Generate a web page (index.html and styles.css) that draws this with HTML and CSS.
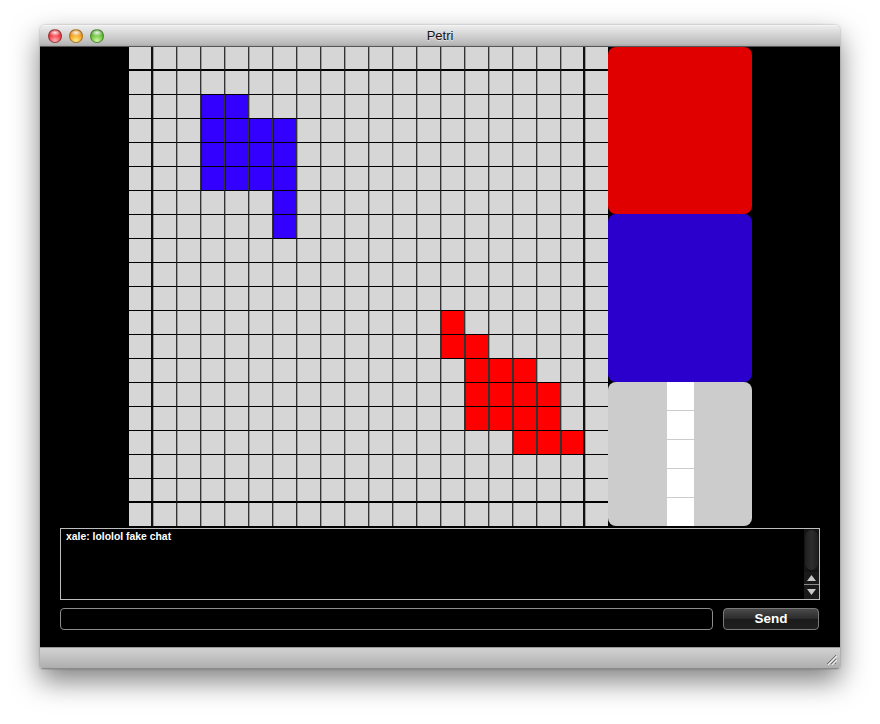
FILE: index.html
```html
<!DOCTYPE html>
<html>
<head>
<meta charset="utf-8">
<title>Petri</title>
<link rel="stylesheet" href="styles.css">
</head>
<body>
<div class="window">
  <div class="titlebar">
    <div class="lights">
      <span class="light close"></span>
      <span class="light minimize"></span>
      <span class="light zoom"></span>
    </div>
    <div class="title">Petri</div>
    <div class="spacer"></div>
  </div>
  <div class="content">
    <div class="board">
      <div class="grid">
<i></i><i></i><i></i><i></i><i></i><i></i><i></i><i></i><i></i><i></i><i></i><i></i><i></i><i></i><i></i><i></i><i></i><i></i><i></i><i></i>
<i></i><i></i><i></i><i></i><i></i><i></i><i></i><i></i><i></i><i></i><i></i><i></i><i></i><i></i><i></i><i></i><i></i><i></i><i></i><i></i>
<i></i><i></i><i></i><i class="b"></i><i class="b"></i><i></i><i></i><i></i><i></i><i></i><i></i><i></i><i></i><i></i><i></i><i></i><i></i><i></i><i></i><i></i>
<i></i><i></i><i></i><i class="b"></i><i class="b"></i><i class="b"></i><i class="b"></i><i></i><i></i><i></i><i></i><i></i><i></i><i></i><i></i><i></i><i></i><i></i><i></i><i></i>
<i></i><i></i><i></i><i class="b"></i><i class="b"></i><i class="b"></i><i class="b"></i><i></i><i></i><i></i><i></i><i></i><i></i><i></i><i></i><i></i><i></i><i></i><i></i><i></i>
<i></i><i></i><i></i><i class="b"></i><i class="b"></i><i class="b"></i><i class="b"></i><i></i><i></i><i></i><i></i><i></i><i></i><i></i><i></i><i></i><i></i><i></i><i></i><i></i>
<i></i><i></i><i></i><i></i><i></i><i></i><i class="b"></i><i></i><i></i><i></i><i></i><i></i><i></i><i></i><i></i><i></i><i></i><i></i><i></i><i></i>
<i></i><i></i><i></i><i></i><i></i><i></i><i class="b"></i><i></i><i></i><i></i><i></i><i></i><i></i><i></i><i></i><i></i><i></i><i></i><i></i><i></i>
<i></i><i></i><i></i><i></i><i></i><i></i><i></i><i></i><i></i><i></i><i></i><i></i><i></i><i></i><i></i><i></i><i></i><i></i><i></i><i></i>
<i></i><i></i><i></i><i></i><i></i><i></i><i></i><i></i><i></i><i></i><i></i><i></i><i></i><i></i><i></i><i></i><i></i><i></i><i></i><i></i>
<i></i><i></i><i></i><i></i><i></i><i></i><i></i><i></i><i></i><i></i><i></i><i></i><i></i><i></i><i></i><i></i><i></i><i></i><i></i><i></i>
<i></i><i></i><i></i><i></i><i></i><i></i><i></i><i></i><i></i><i></i><i></i><i></i><i></i><i class="r"></i><i></i><i></i><i></i><i></i><i></i><i></i>
<i></i><i></i><i></i><i></i><i></i><i></i><i></i><i></i><i></i><i></i><i></i><i></i><i></i><i class="r"></i><i class="r"></i><i></i><i></i><i></i><i></i><i></i>
<i></i><i></i><i></i><i></i><i></i><i></i><i></i><i></i><i></i><i></i><i></i><i></i><i></i><i></i><i class="r"></i><i class="r"></i><i class="r"></i><i></i><i></i><i></i>
<i></i><i></i><i></i><i></i><i></i><i></i><i></i><i></i><i></i><i></i><i></i><i></i><i></i><i></i><i class="r"></i><i class="r"></i><i class="r"></i><i class="r"></i><i></i><i></i>
<i></i><i></i><i></i><i></i><i></i><i></i><i></i><i></i><i></i><i></i><i></i><i></i><i></i><i></i><i class="r"></i><i class="r"></i><i class="r"></i><i class="r"></i><i></i><i></i>
<i></i><i></i><i></i><i></i><i></i><i></i><i></i><i></i><i></i><i></i><i></i><i></i><i></i><i></i><i></i><i></i><i class="r"></i><i class="r"></i><i class="r"></i><i></i>
<i></i><i></i><i></i><i></i><i></i><i></i><i></i><i></i><i></i><i></i><i></i><i></i><i></i><i></i><i></i><i></i><i></i><i></i><i></i><i></i>
<i></i><i></i><i></i><i></i><i></i><i></i><i></i><i></i><i></i><i></i><i></i><i></i><i></i><i></i><i></i><i></i><i></i><i></i><i></i><i></i>
<i></i><i></i><i></i><i></i><i></i><i></i><i></i><i></i><i></i><i></i><i></i><i></i><i></i><i></i><i></i><i></i><i></i><i></i><i></i><i></i>
      </div>
      <div class="panel">
        <div class="swatch swatch-red"></div>
        <div class="swatch swatch-blue"></div>
        <div class="swatch swatch-meter">
          <div class="meter"><span></span><span></span><span></span><span></span><span></span></div>
        </div>
      </div>
    </div>
    <div class="chat">
      <div class="log">
        <div class="log-text">xale: lololol fake chat</div>
        <div class="scroller">
          <div class="track"><div class="thumb"></div></div>
          <div class="arrow up"><svg width="9" height="6" viewBox="0 0 9 6"><path d="M4.5 0 L9 6 L0 6 Z" fill="#c8c8c8"/></svg></div>
          <div class="arrow down"><svg width="9" height="6" viewBox="0 0 9 6"><path d="M0 0 L9 0 L4.5 6 Z" fill="#c8c8c8"/></svg></div>
        </div>
      </div>
      <div class="entry">
        <div class="input"></div>
        <button class="send">Send</button>
      </div>
    </div>
  </div>
  <div class="statusbar">
    <svg class="grip" width="12" height="12" viewBox="0 0 12 12">
      <path d="M11 2 L2 11 M11 6 L6 11 M11 10 L10 11" stroke="#6e6e6e" stroke-width="1"/>
      <path d="M12 3 L3 12 M12 7 L7 12" stroke="#f2f2f2" stroke-width="1"/>
    </svg>
  </div>
</div>
</body>
</html>
```

FILE: styles.css
```css
* { box-sizing: border-box; }

html, body {
  margin: 0;
  padding: 0;
  background: #ffffff;
}

body {
  font-family: "Liberation Sans", Arial, sans-serif;
  padding: 25px 0 0 40px;
  height: 724px;
  overflow: hidden;
}

.window {
  width: 800px;
  border-radius: 5px 5px 3px 3px;
  box-shadow: 0 12px 28px rgba(0, 0, 0, 0.5), 0 0 2px rgba(0, 0, 0, 0.35);
  overflow: hidden;
}

.titlebar {
  height: 22px;
  display: grid;
  grid-template-columns: 1fr auto 1fr;
  align-items: center;
  background: linear-gradient(#ececec, #d3d3d3 45%, #b9b9b9 90%, #a8a8a8);
  border-top: 1px solid #f4f4f4;
  border-bottom: 1px solid #555;
}

.lights {
  display: flex;
  gap: 7px;
  padding-left: 8px;
}

.light {
  width: 14px;
  height: 14px;
  border-radius: 50%;
  border: 1px solid rgba(60, 20, 20, 0.45);
}

.light.close {
  background:
    radial-gradient(ellipse 55% 30% at 50% 22%, rgba(255,255,255,0.9), rgba(255,255,255,0) 100%),
    radial-gradient(circle at 50% 90%, #ffb0b4 0%, #f2434a 50%, #b3121a 100%);
}

.light.minimize {
  border-color: rgba(90, 50, 0, 0.45);
  background:
    radial-gradient(ellipse 55% 30% at 50% 22%, rgba(255,255,255,0.9), rgba(255,255,255,0) 100%),
    radial-gradient(circle at 50% 90%, #ffef8a 0%, #f5a623 50%, #b5620a 100%);
}

.light.zoom {
  border-color: rgba(20, 70, 10, 0.45);
  background:
    radial-gradient(ellipse 55% 30% at 50% 22%, rgba(255,255,255,0.9), rgba(255,255,255,0) 100%),
    radial-gradient(circle at 50% 90%, #d2f7a4 0%, #6fc541 50%, #2f7d17 100%);
}

.title {
  font-size: 13px;
  color: #141414;
  text-shadow: 0 1px 0 rgba(255,255,255,0.5);
  line-height: 20px;
}

.content {
  background: #000;
  height: 600px;
  display: flex;
  flex-direction: column;
}

.board {
  display: flex;
  padding-left: 89px;
  height: 479px;
}

.grid {
  display: grid;
  grid-template-columns: repeat(19, 24px) 23px;
  grid-template-rows: repeat(19, 24px) 23px;
  width: 479px;
  height: 479px;
}

.grid i {
  display: block;
  background: #d6d6d6;
  border-right: 1px solid #333;
  border-bottom: 1px solid #000;
  box-shadow: inset 1px 0 0 #9a9a9a;
}

.grid i:nth-child(20n+1) {
  box-shadow: none;
}

.grid i.b { background: #3300ff; box-shadow: inset 1px 0 0 #2200aa; }
.grid i.r { background: #ff0000; box-shadow: inset 1px 0 0 #aa0000; }

.grid i:nth-child(20n+1),
.grid i:nth-child(20n+19) {
  border-right: 2px solid #111;
}

.grid i:nth-child(20n) {
  border-right: 0;
}

.grid i:nth-child(-n+20),
.grid i:nth-child(n+361):nth-child(-n+380) {
  border-bottom-width: 2px;
}

.grid i:nth-child(n+381) {
  border-bottom: 0;
}

.panel {
  width: 144px;
  display: flex;
  flex-direction: column;
}

.swatch {
  border-radius: 8px;
}

.swatch-red {
  height: 167px;
  background: #e00000;
}

.swatch-blue {
  height: 168px;
  background: #2b00cc;
}

.swatch-meter {
  height: 144px;
  background: #cccccc;
  display: flex;
  justify-content: center;
}

.meter {
  width: 27px;
  display: flex;
  flex-direction: column;
  gap: 1px;
}

.meter span {
  flex: 1;
  background: #ffffff;
}

.chat {
  margin: 2px 20px 0 20px;
}

.log {
  height: 72px;
  border: 1px solid #bdbdbd;
  display: flex;
}

.log-text {
  flex: 1;
  color: #fff;
  font-weight: bold;
  font-size: 10.4px;
  padding: 2px 0 0 5px;
  line-height: 12px;
}

.scroller {
  width: 15px;
  display: flex;
  flex-direction: column;
  background: #141414;
}

.track {
  flex: 1;
  padding: 1px 1px 2px 1px;
}

.thumb {
  height: 100%;
  border-radius: 7px;
  background: linear-gradient(90deg, #1f1f1f, #2d2d2d 50%, #1f1f1f);
}

.arrow {
  height: 12px;
  display: flex;
  align-items: center;
  justify-content: center;
  background: #1a1a1a;
}

.arrow.down {
  border-top: 1px solid #8a8a8a;
  height: 15px;
}

.entry {
  display: flex;
  gap: 10px;
  margin-top: 8px;
  height: 22px;
  padding-right: 1px;
}

.input {
  flex: 1;
  border: 1px solid #8c8c8c;
  border-radius: 4px;
  background: #000;
}

.send {
  width: 96px;
  height: 22px;
  margin: 0;
  padding: 0;
  border: 1px solid #7a7a7a;
  border-radius: 4px;
  background: linear-gradient(#4a4a4a, #2a2a2a 50%, #1b1b1b 51%, #202020);
  color: #fff;
  font-family: "Liberation Sans", Arial, sans-serif;
  font-weight: bold;
  font-size: 13.5px;
  line-height: 20px;
}

.statusbar {
  height: 22px;
  background: linear-gradient(#d2d2d2, #bdbdbd 60%, #aeaeae);
  border-top: 1px solid #9a9a9a;
  border-bottom: 1px solid #8a8a8a;
  display: flex;
  justify-content: flex-end;
  align-items: flex-end;
  padding: 0 3px 3px 0;
}

.grip {
  display: block;
}
```
